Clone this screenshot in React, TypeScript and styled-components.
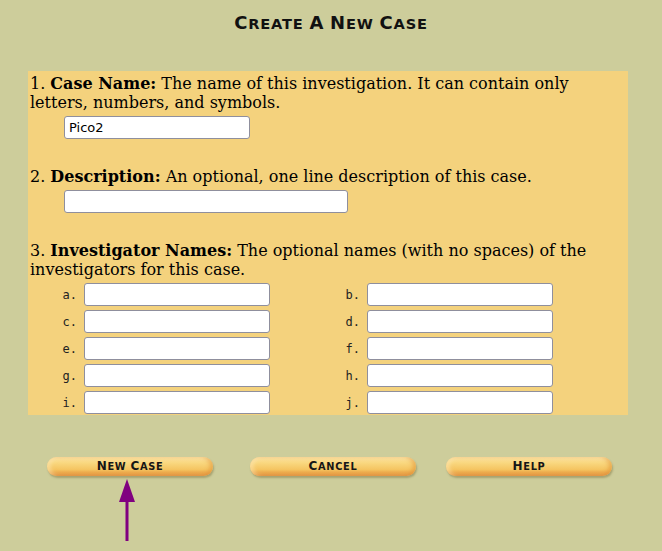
import styled, { createGlobalStyle } from 'styled-components'

const GlobalStyle = createGlobalStyle`
  html, body {
    margin: 0;
    padding: 0;
    background: #cdcd9b;
  }
  body {
    font-family: "DejaVu Serif", serif;
    color: #000;
  }
`

const Page = styled.div`
  width: 662px;
  min-height: 551px;
  padding-top: 13px;
  box-sizing: border-box;
`

const Title = styled.h1`
  margin: 0;
  height: 21px;
  text-align: center;
  font-family: "DejaVu Sans", sans-serif;
  font-weight: bold;
  font-size: 14.6px;
  line-height: 21px;
  text-transform: uppercase;
  letter-spacing: 0.8px;
  color: #111;
`

const Cap = styled.span<{ $size: number }>`
  font-size: ${(p) => p.$size}px;
  line-height: 1;
`

const Panel = styled.div`
  margin: 37px 0 0 28px;
  width: 600px;
  background: #f4d27d;
  padding: 2px 0 1px 2px;
  box-sizing: border-box;
`

const Section = styled.div<{ $gap?: number }>`
  margin-top: ${(p) => p.$gap ?? 0}px;
`

const Text = styled.p`
  margin: 0;
  padding-top: 1px;
  font-size: 16px;
  line-height: 19px;
`

const FieldRow = styled.div`
  margin-top: 4px;
  padding-left: 34px;
  display: flex;
`

const TextInput = styled.input<{ $w: number }>`
  width: ${(p) => p.$w}px;
  height: 23px;
  box-sizing: border-box;
  border: 1px solid #8f8f9d;
  border-radius: 3px;
  background: #fff;
  padding: 0 4px;
  font-family: "DejaVu Sans", sans-serif;
  font-size: 13px;
  color: #000;
  outline: none;
`

const NameGrid = styled.div`
  margin-top: 4px;
  display: grid;
  grid-template-columns: 50px 186px 89px 186px;
  column-gap: 4px;
  row-gap: 4px;
  align-items: center;
`

const Letter = styled.label`
  text-align: right;
  padding-right: 3px;
  font-family: "DejaVu Sans Mono", monospace;
  font-size: 12px;
  color: #222;
`

const ButtonBar = styled.div`
  margin-top: 42px;
  padding-left: 47px;
  display: grid;
  grid-template-columns: 203px 196px auto;
  justify-items: start;
`

const ButtonCell = styled.div`
  display: flex;
  flex-direction: column;
`

const PillButton = styled.button`
  display: block;
  width: 166px;
  height: 19px;
  padding: 0;
  border: none;
  border-radius: 10px;
  background: linear-gradient(
    to bottom,
    #fde8a8 0%,
    #f9d880 30%,
    #f5c562 65%,
    #e9a043 88%,
    #d9832a 100%
  );
  box-shadow: 1px 2px 2px rgba(120, 110, 60, 0.45),
    inset -3px 0 4px rgba(220, 130, 40, 0.45),
    inset 3px 0 4px rgba(255, 240, 200, 0.5);
  font-family: "DejaVu Sans", sans-serif;
  font-weight: bold;
  font-size: 9.8px;
  line-height: 19px;
  text-transform: uppercase;
  letter-spacing: 0.7px;
  color: #161616;
  cursor: pointer;
`

const Arrow = styled.svg`
  margin: 3px 0 0 70px;
  display: block;
`

function SmallCaps({ text, cap }: { text: string; cap: number }) {
  const words = text.split(' ')
  return (
    <>
      {words.map((w, i) => (
        <span key={i}>
          <Cap $size={cap}>{w[0]}</Cap>
          {w.slice(1)}
          {i < words.length - 1 ? ' ' : ''}
        </span>
      ))}
    </>
  )
}

const letters = ['a', 'b', 'c', 'd', 'e', 'f', 'g', 'h', 'i', 'j']

function App() {
  return (
    <>
      <GlobalStyle />
      <Page>
        <Title>
          <SmallCaps text="Create A New Case" cap={18} />
        </Title>
        <Panel>
          <Section>
            <Text>
              1. <b>Case Name:</b> The name of this investigation. It can contain only
              letters, numbers, and symbols.
            </Text>
            <FieldRow>
              <TextInput $w={186} defaultValue="Pico2" />
            </FieldRow>
          </Section>
          <Section $gap={27}>
            <Text>
              2. <b>Description:</b> An optional, one line description of this case.
            </Text>
            <FieldRow>
              <TextInput $w={284} />
            </FieldRow>
          </Section>
          <Section $gap={27}>
            <Text>
              3. <b>Investigator Names:</b> The optional names (with no spaces) of the
              investigators for this case.
            </Text>
            <NameGrid>
              {letters.map((l) => (
                <>
                  <Letter key={l + 'l'}>{l}.</Letter>
                  <TextInput key={l + 'i'} $w={186} />
                </>
              ))}
            </NameGrid>
          </Section>
        </Panel>
        <ButtonBar>
          <ButtonCell>
            <PillButton>
              <SmallCaps text="New Case" cap={12} />
            </PillButton>
            <Arrow width="20" height="62" viewBox="0 0 20 62">
              <polygon points="10,0 2,23 18,23" fill="#800080" />
              <rect x="8.5" y="20" width="3" height="42" fill="#800080" />
            </Arrow>
          </ButtonCell>
          <ButtonCell>
            <PillButton>
              <SmallCaps text="Cancel" cap={12} />
            </PillButton>
          </ButtonCell>
          <ButtonCell>
            <PillButton>
              <SmallCaps text="Help" cap={12} />
            </PillButton>
          </ButtonCell>
        </ButtonBar>
      </Page>
    </>
  )
}

export default App
